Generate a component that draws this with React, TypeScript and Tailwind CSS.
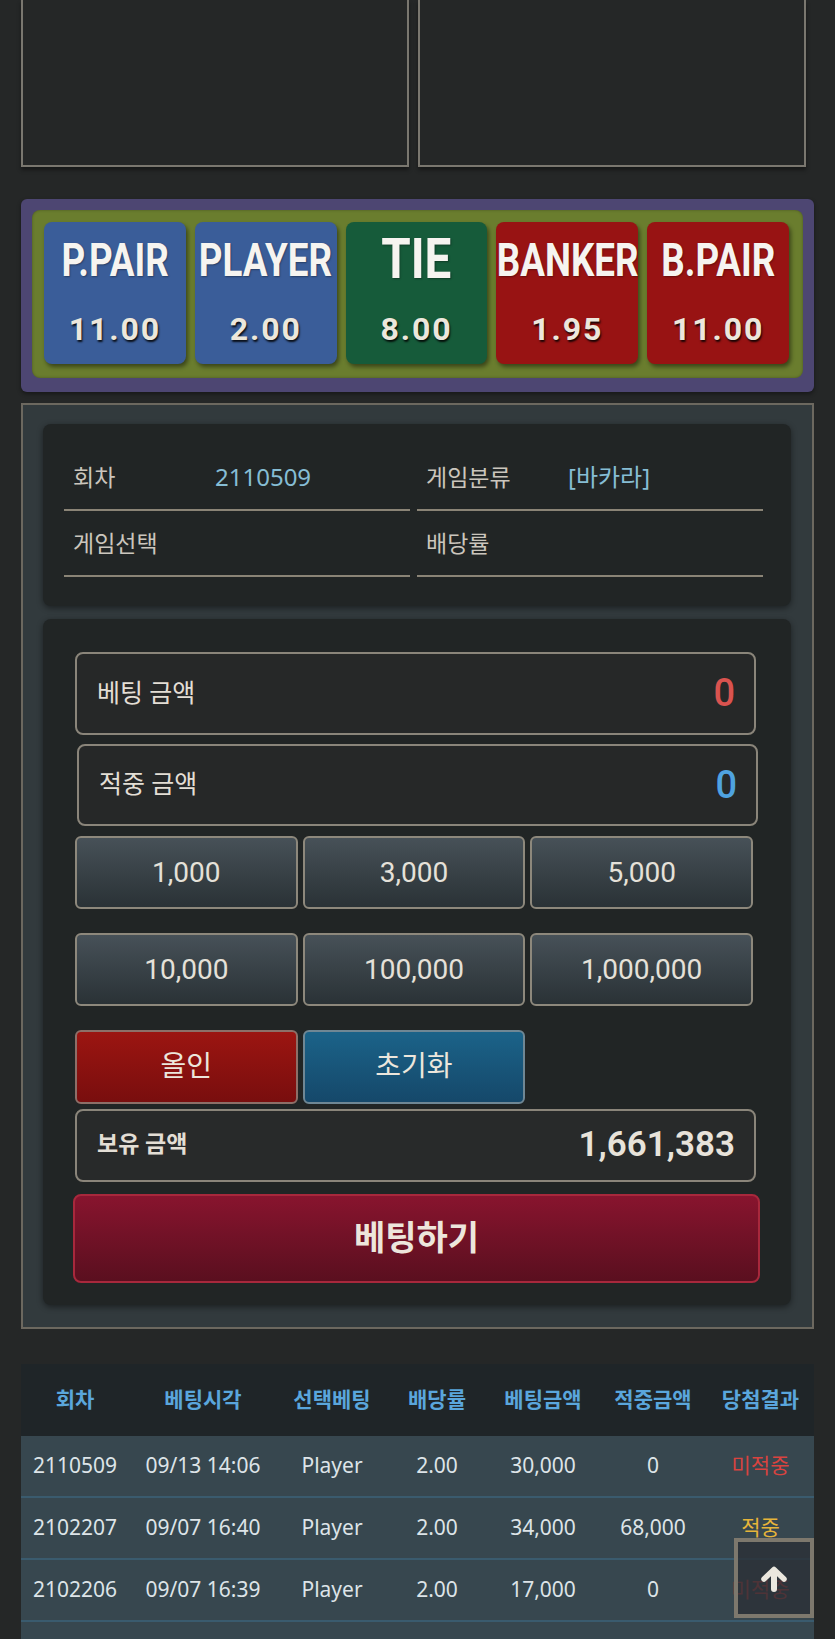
const odds = [
  { label: 'P.PAIR', value: '11.00', bg: 'bg-[#3a5d99]' },
  { label: 'PLAYER', value: '2.00', bg: 'bg-[#3a5d99]' },
  { label: 'TIE', value: '8.00', bg: 'bg-[#165b3a]' },
  { label: 'BANKER', value: '1.95', bg: 'bg-[#981313]' },
  { label: 'B.PAIR', value: '11.00', bg: 'bg-[#981313]' },
];

const chips = ['1,000', '3,000', '5,000', '10,000', '100,000', '1,000,000'];

const rows = [
  ['2110509', '09/13 14:06', 'Player', '2.00', '30,000', '0', '미적중'],
  ['2102207', '09/07 16:40', 'Player', '2.00', '34,000', '68,000', '적중'],
  ['2102206', '09/07 16:39', 'Player', '2.00', '17,000', '0', '미적중'],
];

const heads = ['회차', '베팅시각', '선택베팅', '배당률', '베팅금액', '적중금액', '당첨결과'];

const cols = 'grid grid-cols-[108px_148px_110px_100px_112px_108px_107px]';

function OddsButton({ label, value, bg }: { label: string; value: string; bg: string }) {
  const tie = label === 'TIE';
  return (
    <div className={`flex h-[142px] min-w-0 flex-col items-center rounded-lg ${bg} shadow-[2px_3px_4px_rgba(0,0,0,0.45)]`}>
      <div className={`flex w-full justify-center ${tie ? 'pt-[9px]' : 'pt-[15px]'}`}>
        <span
          className={`whitespace-nowrap font-bold leading-none text-[#f6f4f0] [text-shadow:1px_1px_2px_rgba(0,0,0,0.35)] ${
            tie ? 'scale-x-[0.85] text-[56px]' : 'scale-x-[0.8] text-[46px]'
          }`}
        >
          {label}
        </span>
      </div>
      <div className="mt-auto mb-[19px] text-[32px] font-bold leading-none tracking-[0.06em] text-[#ece7dc] [text-shadow:1px_2px_2px_rgba(0,0,0,0.85)]">
        {value}
      </div>
    </div>
  );
}

function InfoCell({ label, value }: { label: string; value?: string }) {
  return (
    <div className="flex h-[66px] items-center border-b-2 border-[#8a8476] pl-[9px] font-['Noto_Sans','Noto_Sans_CJK_KR',sans-serif]">
      <span className="w-[142px] text-[23px] text-[#cbc6bd]">{label}</span>
      {value && <span className="text-[24px] text-[#86bdd4]">{value}</span>}
    </div>
  );
}

function UpArrow() {
  return (
    <svg width="28" height="27" viewBox="0 0 28 27" fill="none" stroke="currentColor" strokeLinecap="round" strokeLinejoin="round">
      <polyline points="4,14 14,4.5 24,14" strokeWidth="5.5" />
      <line x1="14" y1="6" x2="14" y2="24" strokeWidth="6" />
    </svg>
  );
}

export default function App() {
  return (
    <div className="min-h-screen bg-[#252727] px-[21px] pb-[40px] font-['Roboto','Noto_Sans_CJK_KR',sans-serif] text-[#e3ded5]">
      {/* video boxes */}
      <div className="grid w-[785px] grid-cols-2 gap-[9px]">
        <div className="h-[167px] border-2 border-t-0 border-[#7a776f] shadow-[0_3px_4px_rgba(0,0,0,0.4)]" />
        <div className="h-[167px] border-2 border-t-0 border-[#7a776f] shadow-[0_3px_4px_rgba(0,0,0,0.4)]" />
      </div>

      {/* odds board */}
      <div className="mt-[32px] rounded-md bg-[#4d4672] px-[11px] pt-[11px] pb-[14px] shadow-[0_2px_4px_rgba(0,0,0,0.4)]">
        <div className="grid grid-cols-5 gap-[9px] rounded-lg bg-[#6a7d2e] pt-[12px] pb-[14px] pl-[12px] pr-[14px] shadow-[inset_0_0_3px_rgba(0,0,0,0.3)]">
          {odds.map((o) => (
            <OddsButton key={o.label} {...o} />
          ))}
        </div>
      </div>

      {/* bet panel */}
      <div className="mt-[11px] border-2 border-[#6c685f] bg-[#323a3d] pt-[19px] pb-[22px] pl-[20px] pr-[21px]">
        <div className="rounded-lg bg-[#212525] pt-[21px] pb-[29px] pl-[21px] pr-[28px] shadow-[0_2px_6px_rgba(0,0,0,0.45)]">
          <div className="grid grid-cols-2 gap-x-[7px]">
            <InfoCell label="회차" value="2110509" />
            <InfoCell label="게임분류" value="[바카라]" />
            <InfoCell label="게임선택" />
            <InfoCell label="배당률" />
          </div>
        </div>

        <div className="mt-[13px] rounded-lg bg-[#212525] pt-[33px] pb-[22px] pl-[32px] shadow-[0_2px_6px_rgba(0,0,0,0.45)]">
          <div className="flex h-[83px] w-[681px] items-center justify-between rounded-lg border-2 border-[#8a857a] bg-[#262828] pl-[20px] pr-[19px]">
            <span className="text-[25px]">베팅 금액</span>
            <span className="text-[38px] font-medium text-[#d9534f]">0</span>
          </div>
          <div className="mt-[9px] ml-[2px] flex h-[82px] w-[681px] items-center justify-between rounded-lg border-2 border-[#8a857a] bg-[#262828] pl-[20px] pr-[19px]">
            <span className="text-[25px]">적중 금액</span>
            <span className="text-[38px] font-medium text-[#4fa3e0]">0</span>
          </div>

          <div className="mt-[10px] grid w-[678px] grid-cols-3 gap-x-[5px] gap-y-[24px]">
            {chips.map((c) => (
              <button
                key={c}
                className="h-[73px] rounded-md border-2 border-[#8d887c] bg-gradient-to-b from-[#475158] to-[#2a3236] text-[28px] text-[#e5e1d9]"
              >
                {c}
              </button>
            ))}
            <button className="h-[74px] rounded-md border-2 border-[#8d6f68] bg-gradient-to-b from-[#9c1511] to-[#790e0e] text-[28px] text-[#ece6dc]">
              올인
            </button>
            <button className="h-[74px] rounded-md border-2 border-[#6f8794] bg-gradient-to-b from-[#1b6389] to-[#15486a] text-[28px] text-[#ece6dc]">
              초기화
            </button>
          </div>

          <div className="mt-[5px] flex h-[73px] w-[681px] items-center justify-between rounded-lg border-2 border-[#8a857a] bg-[#282a2a] pl-[20px] pr-[19px]">
            <span className="text-[23px] font-bold">보유 금액</span>
            <span className="text-[35px] font-semibold text-[#e8e3da]">1,661,383</span>
          </div>

          <button className="mt-[12px] -ml-[2px] h-[89px] w-[687px] rounded-lg border-2 border-[#a8283c] bg-gradient-to-b from-[#88142e] to-[#5a0f1f] text-[34px] font-bold text-[#ede6dc]">
            베팅하기
          </button>
        </div>
      </div>

      {/* history table */}
      <div className="mt-[35px] w-[793px] font-['Noto_Sans','Noto_Sans_CJK_KR',sans-serif]">
        <div className={`${cols} h-[72px] items-center bg-[#1f2528] text-center text-[21px] font-bold text-[#5aa6dc]`}>
          {heads.map((h) => (
            <div key={h}>{h}</div>
          ))}
        </div>
        {rows.map((r) => (
          <div
            key={r[0]}
            className={`${cols} h-[62px] items-center border-b-2 border-[#3a5b6e] bg-[#37474f] text-center text-[21px] text-[#dde4e8]`}
          >
            {r.map((cell, i) => (
              <div
                key={i}
                className={i === 6 ? (cell === '적중' ? 'text-[#e6b43a]' : 'text-[#d9433f]') : ''}
              >
                {cell}
              </div>
            ))}
          </div>
        ))}
        <div className="h-[62px] bg-[#37474f]" />
      </div>

      <button className="fixed right-[21px] bottom-[21px] flex h-[80px] w-[80px] items-center justify-center border-4 border-[#7d786d] bg-[#2a3036]/80 text-[#ebe7de]">
        <UpArrow />
      </button>
    </div>
  );
}
